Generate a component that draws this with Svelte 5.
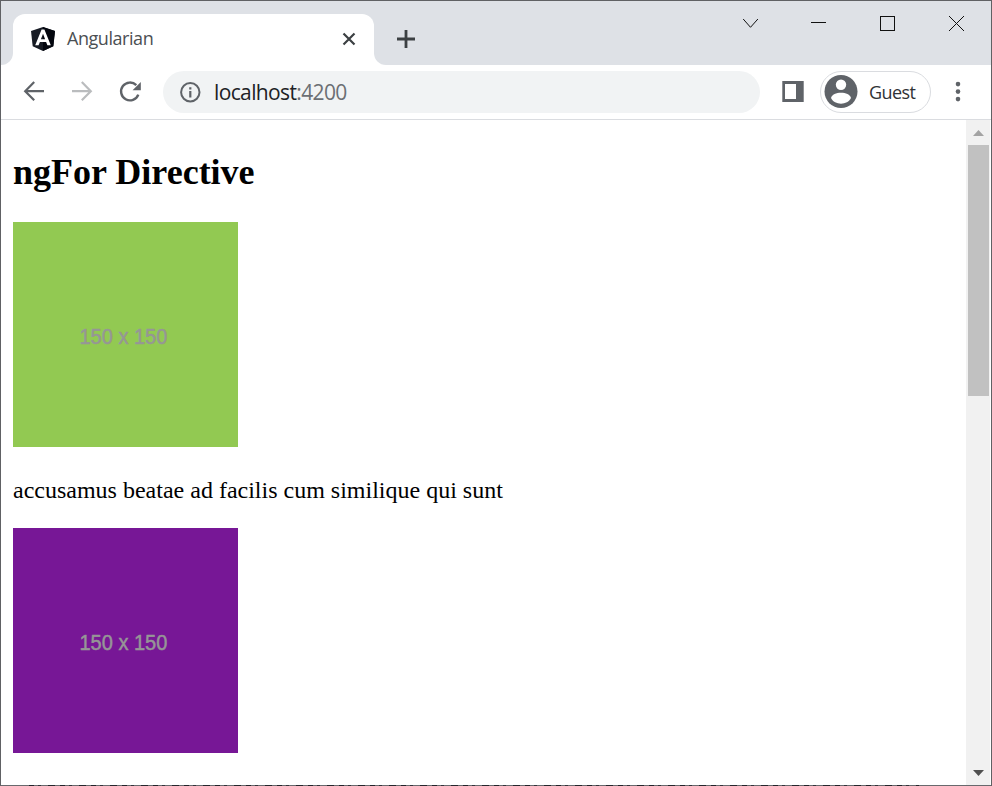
<script>
  const photos = [
    { color: '#92c952', title: 'accusamus beatae ad facilis cum similique qui sunt' },
    { color: '#771796', title: '' }
  ];
</script>

<div class="window">
  <div class="strip">
    <div class="edge left"></div>
    <div class="tabback">
      <div class="tab">
        <svg class="logo" width="26" height="26" viewBox="0 0 26 26">
          <path d="M13 1L25 5L23.3 20.2L13 25L2.7 20.2L1 5Z" fill="#171b24" />
          <path d="M13 1L25 5L23.3 20.2L13 25Z" fill="#03060e" />
          <path fill="#fff" fill-rule="evenodd" d="M11.6 3.6H14.4L20.8 19.2H17.4L16.1 16H9.9L8.6 19.2H5.2ZM13 7.8L10.9 13.3H15.1Z" />
        </svg>
        <span class="tabname">Angularian</span>
        <svg class="tabclose" width="14" height="14" viewBox="0 0 14 14"><path d="M1.5 1.5L12.5 12.5M12.5 1.5L1.5 12.5" stroke="#3c4043" stroke-width="2.2" /></svg>
      </div>
    </div>
    <div class="edge right">
      <svg class="plus" width="20" height="20" viewBox="0 0 20 20"><path d="M10 1V19M1 10H19" stroke="#3c4043" stroke-width="2.8" /></svg>
      <svg class="controls" width="240" height="40" viewBox="0 0 240 40">
        <g fill="none" stroke="#111" stroke-width="1">
          <path d="M12.2 19L19.5 27.3L26.9 19" />
          <path d="M80 22.5H95" />
          <rect x="149.5" y="16.5" width="14" height="14" />
          <path d="M218 16L233 31M233 16L218 31" />
        </g>
      </svg>
    </div>
  </div>

  <div class="toolbar">
    <svg width="162" height="54" viewBox="1 65 162 54">
      <g fill="none" stroke-width="2.2">
        <path d="M44 91.2H25.5M34.2 82.1L25.2 91.2L34.2 100.3" stroke="#5f6368" />
        <path d="M72 91.2H90.5M81.8 82.1L90.8 91.2L81.8 100.3" stroke="#babcbe" />
        <path d="M138.3 94.6A8.9 8.9 0 1 1 136.3 85.2" stroke="#5f6368" stroke-width="2.4" />
      </g>
      <path d="M140.8 82V90.2H132.6Z" fill="#5f6368" />
    </svg>
    <div class="address">
      <svg width="22" height="22" viewBox="0 0 22 22">
        <circle cx="11.3" cy="11.3" r="9.2" fill="none" stroke="#5f6368" stroke-width="2" />
        <path d="M11.3 10V16.4M11.3 6.2V8.4" stroke="#5f6368" stroke-width="2.2" />
      </svg>
      <span class="url">localhost<span class="port">:4200</span></span>
    </div>
    <svg class="panel" width="22" height="22" viewBox="0 0 22 22"><path fill="#5f6368" fill-rule="evenodd" d="M0.3 0H21.7V21H0.3ZM3 3V18H14V3Z" /></svg>
    <div class="guest">
      <svg width="34" height="34" viewBox="0 0 34 34">
        <circle cx="17" cy="16.5" r="16.5" fill="#5f6368" />
        <circle cx="17" cy="9.8" r="5.2" fill="#fff" />
        <path d="M7 23C8.5 16 25.5 16 27 23C23.5 30.5 10.5 30.5 7 23Z" fill="#fff" />
      </svg>
      <span>Guest</span>
    </div>
    <svg class="dots" width="6" height="22" viewBox="0 0 6 22"><g fill="#5f6368"><circle cx="3" cy="3.1" r="2.3" /><circle cx="3" cy="10.6" r="2.3" /><circle cx="3" cy="18.1" r="2.3" /></g></svg>
  </div>

  <div class="view">
    <main>
      <h2>ngFor Directive</h2>
      {#each photos as photo}
        <div class="photo" style:background={photo.color}><span>150 x 150</span></div>
        {#if photo.title}<p>{photo.title}</p>{/if}
      {/each}
    </main>
    <div class="scroll">
      <svg width="24" height="25" viewBox="0 0 24 25"><path d="M7 16L12.5 10L18 16Z" fill="#a3a3a3" /></svg>
      <div class="thumb"></div>
      <svg class="down" width="24" height="25" viewBox="0 0 24 25"><path d="M7 10H18L12.5 16Z" fill="#505050" /></svg>
    </div>
  </div>
  <div class="bottomline"><div class="marks"></div></div>
</div>

<style>
  :global(body) { margin: 0; overflow: hidden; }
  svg { display: block; flex: none; }
  .window {
    box-sizing: border-box; width: 992px; height: 786px;
    border: 1px solid #606164; border-bottom: 0; background: #fff;
    display: flex; flex-direction: column; overflow: hidden;
  }
  .strip { display: flex; height: 64px; flex: none; }
  .edge { background: #dee1e6; }
  .left { width: 12px; border-bottom-right-radius: 12px; }
  .tabback { width: 361px; background: linear-gradient(#dee1e6 30px, #fff 30px); }
  .tab {
    box-sizing: border-box; height: 51px; margin-top: 13px; background: #fff;
    border-radius: 12px 12px 0 0; display: flex; padding: 12px 18px 0 17px;
  }
  .tabname {
    margin-left: 11px; width: 86px; font: 18px/25px "Open Sans", sans-serif;
    letter-spacing: -0.45px; color: #4b4f53; white-space: nowrap;
  }
  .tabclose { margin: 6px 0 0 auto; }
  .right { flex: 1; display: flex; justify-content: space-between; border-bottom-left-radius: 12px; }
  .plus { margin: 28px 0 0 22px; }
  .controls { margin: -1px 20px 0 0; }
  .toolbar { height: 54px; flex: none; display: flex; align-items: center; border-bottom: 1px solid #dadce0; }
  .address {
    box-sizing: border-box; width: 597px; height: 42px; border-radius: 21px;
    background: #f1f3f4; display: flex; align-items: center; padding-left: 16px;
  }
  .url { margin-left: 13px; font: 21px/30px "Open Sans", sans-serif; letter-spacing: -0.63px; color: #202124; }
  .port { color: #6b6f73; }
  .panel { margin-left: 22px; }
  .guest {
    box-sizing: border-box; width: 111px; height: 42px; margin-left: 16px;
    border: 1px solid #dadce0; border-radius: 21px; display: flex; align-items: center; padding-left: 3px;
    font: 18px/26px "Open Sans", sans-serif; letter-spacing: -0.6px; color: #303236;
  }
  .guest span { margin: 0 0 1px 11px; }
  .dots { margin-left: 24px; }
  .view { height: 665px; flex: none; display: flex; }
  main { flex: 1; padding-left: 12px; font-family: "Liberation Serif", serif; color: #000; }
  h2 { margin: 31px 0 29px; font-size: 36px; line-height: 42px; }
  .photo { width: 225px; height: 225px; display: flex; align-items: center; justify-content: center; }
  .photo span {
    font: 22.5px/26px "Liberation Sans", sans-serif; color: #969696; white-space: nowrap;
    padding-top: 5px; transform: translateX(-2px) scaleX(0.89); -webkit-text-stroke: 0.5px #969696;
  }
  p { margin: 30px 0 24px; font-size: 24px; line-height: 27px; white-space: nowrap; }
  .scroll { width: 24px; margin-right: 1px; background: #f1f1f1; display: flex; flex-direction: column; }
  .thumb { height: 251px; margin: 0 1px 0 2px; background: #c1c1c1; }
  .down { margin-top: auto; }
  .bottomline { height: 1px; flex: none; background: #68696d; }
  .marks {
    width: 890px; height: 1px; margin-left: 28px;
    background: repeating-linear-gradient(90deg, #22232a 0 5px, #68696d 5px 9px, #32333a 9px 12px, #68696d 12px 19px, #25262c 19px 26px, #68696d 26px 31px);
  }
</style>
